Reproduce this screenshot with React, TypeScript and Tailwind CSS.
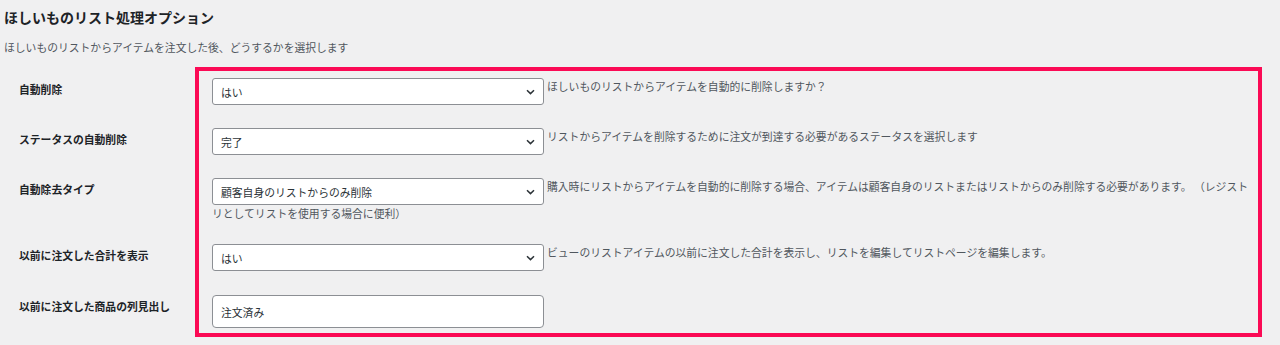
import { ReactNode } from "react";

const rowHeights = ["h-[50px]", "h-[50px]", "h-[66px]", "h-[51px]", "h-[33px]"];

const labels = [
	"自動削除",
	"ステータスの自動削除",
	"自動除去タイプ",
	"以前に注文した合計を表示",
	"以前に注文した商品の列見出し",
];

function Chevron() {
	return (
		<svg
			width="9"
			height="6"
			viewBox="0 0 9 6"
			fill="none"
			className="pointer-events-none absolute right-[9px] top-[11px]"
			aria-hidden
		>
			<path d="M1 1.2L4.5 4.6L8 1.2" stroke="#2c3338" strokeWidth="1.5" />
		</svg>
	);
}

function FakeSelect({ value }: { value: string }) {
	return (
		<span className="relative inline-block align-top">
			<select
				defaultValue={value}
				className="h-[27px] w-[332px] appearance-none rounded-[3px] border border-[#8c8f94] bg-white pl-[8px] text-[10.8px] text-[#2c3338] outline-none"
			>
				<option>{value}</option>
			</select>
			<Chevron />
		</span>
	);
}

function Desc({ children }: { children: ReactNode }) {
	return (
		<span className="ml-[3px] whitespace-nowrap text-[10.8px] leading-[16px] text-[#50575e]">
			{children}
		</span>
	);
}

const rowText = "text-[10.8px] leading-[16px] text-[#50575e]";

export default function App() {
	return (
		<div
			className="h-[345px] w-[1280px] bg-[#f0f0f1] pl-[4px] text-[#1d2327]"
			style={{ fontFamily: '"Noto Sans CJK JP", "Noto Sans", sans-serif' }}
		>
			<h2 className="pt-[7px] text-[14px] font-bold leading-[20px]">
				ほしいものリスト処理オプション
			</h2>
			<p className="mt-[12px] text-[10.8px] leading-[16px] text-[#50575e]">
				ほしいものリストからアイテムを注文した後、どうするかを選択します
			</p>

			<div className="mt-[12px] flex">
				<div className="w-[191px] pl-[15px] pt-[11px]">
					{labels.map((label, i) => (
						<div key={label} className={rowHeights[i]}>
							<div className="pt-[3px] text-[10.8px] font-bold leading-[16px] text-[#1d2327]">
								{label}
							</div>
						</div>
					))}
				</div>

				<div className="w-[1067px] border-4 border-[#fb0a55] pb-[5px] pl-[13px] pt-[7px]">
					<div className={`${rowHeights[0]} ${rowText}`}>
						<FakeSelect value="はい" />
						<Desc>ほしいものリストからアイテムを自動的に削除しますか？</Desc>
					</div>
					<div className={`${rowHeights[1]} ${rowText}`}>
						<FakeSelect value="完了" />
						<Desc>
							リストからアイテムを削除するために注文が到達する必要があるステータスを選択します
						</Desc>
					</div>
					<div className={`${rowHeights[2]} ${rowText}`}>
						<FakeSelect value="顧客自身のリストからのみ削除" />
						<Desc>
							購入時にリストからアイテムを自動的に削除する場合、アイテムは顧客自身のリストまたはリストからのみ削除する必要があります。 （レジスト
						</Desc>
						<br />
						<span className="whitespace-nowrap">リとしてリストを使用する場合に便利）</span>
					</div>
					<div className={`${rowHeights[3]} ${rowText}`}>
						<FakeSelect value="はい" />
						<Desc>
							ビューのリストアイテムの以前に注文した合計を表示し、リストを編集してリストページを編集します。
						</Desc>
					</div>
					<div className={rowHeights[4]}>
						<input
							type="text"
							defaultValue="注文済み"
							className="h-[33px] w-[332px] rounded-[4px] border border-[#8c8f94] bg-white pl-[8px] text-[10.8px] text-[#2c3338] outline-none"
						/>
					</div>
				</div>
			</div>
		</div>
	);
}
